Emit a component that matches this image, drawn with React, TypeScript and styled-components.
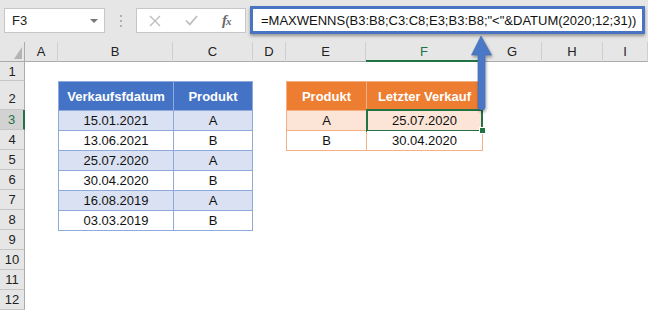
import React from 'react';
import styled, { createGlobalStyle } from 'styled-components';

const GlobalStyle = createGlobalStyle`
  html, body {
    margin: 0;
    padding: 0;
    background: #fff;
  }
  body {
    width: 648px;
    height: 310px;
    overflow: hidden;
    font-family: "Liberation Sans", Arial, sans-serif;
  }
`;

const Window = styled.div`
  position: relative;
  width: 648px;
  height: 310px;
  overflow: hidden;
  background: #fff;
`;

const Toolbar = styled.div`
  height: 42px;
  box-sizing: border-box;
  background: #e6e6e6;
  display: flex;
  align-items: flex-start;
  padding: 8px 0 0 4px;
`;

const NameBox = styled.div`
  width: 101px;
  height: 25px;
  box-sizing: border-box;
  background: #fff;
  border: 1px solid #c6c6c6;
  display: flex;
  align-items: center;
  justify-content: space-between;
  padding: 0 6px 0 7px;
  font-size: 13px;
  color: #222;
`;

const DropArrow = styled.span`
  width: 0;
  height: 0;
  border-left: 4px solid transparent;
  border-right: 4px solid transparent;
  border-top: 4px solid #777;
`;

const Grip = styled.div`
  margin: 7px 14px 0 15px;
  display: flex;
  flex-direction: column;
  gap: 3px;
  & > span {
    width: 2px;
    height: 2px;
    background: #b0b0b0;
  }
`;

const FnBox = styled.div`
  width: 110px;
  height: 25px;
  box-sizing: border-box;
  background: #fff;
  border: 1px solid #c6c6c6;
  display: flex;
  align-items: center;
  gap: 24px;
  padding-left: 12px;
`;

const Fx = styled.span`
  font-family: "Liberation Serif", "Times New Roman", serif;
  font-style: italic;
  font-weight: bold;
  font-size: 15px;
  color: #6a6a6a;
  letter-spacing: -1px;
  & > small {
    font-size: 11px;
  }
`;

const FormulaInput = styled.div`
  margin: -2px 0 0 4px;
  width: 395px;
  height: 28px;
  box-sizing: border-box;
  background: #fff;
  border: 3px solid #4a73c2;
  box-shadow: 0 2px 3px rgba(0, 0, 0, 0.35);
  display: flex;
  align-items: center;
  padding-left: 8px;
  font-size: 13px;
  color: #111;
  white-space: nowrap;
`;

const Sheet = styled.div`
  display: grid;
  grid-template-columns: 25px 33px 115px 80px 33px 80px 117px 59px 61px 45px;
  grid-template-rows: 20px 19px 29px repeat(10, 20px);
`;

const Corner = styled.div`
  grid-column: 1;
  grid-row: 1;
  position: relative;
  background: #e6e6e6;
  border-right: 1px solid #ababab;
  border-bottom: 1px solid #ababab;
  &::after {
    content: '';
    position: absolute;
    right: 2px;
    bottom: 2px;
    width: 0;
    height: 0;
    border-left: 8px solid transparent;
    border-bottom: 12px solid #b4b4b4;
  }
`;

const ColHeader = styled.div<{ $active?: boolean }>`
  grid-row: 1;
  background: #e6e6e6;
  border-right: 1px solid #cfcfcf;
  border-bottom: ${(p) => (p.$active ? '2px solid #217346' : '1px solid #ababab')};
  display: flex;
  align-items: center;
  justify-content: center;
  font-size: 13px;
  color: ${(p) => (p.$active ? '#217346' : '#222')};
`;

const RowHeader = styled.div<{ $active?: boolean; $row: number }>`
  grid-column: 1;
  grid-row: ${(p) => p.$row + 1};
  background: ${(p) => (p.$active ? '#d2d2d2' : '#e6e6e6')};
  border-right: ${(p) => (p.$active ? '2px solid #217346' : '1px solid #ababab')};
  border-bottom: 1px solid #c6c6c6;
  display: flex;
  align-items: ${(p) => (p.$row === 2 ? 'flex-end' : 'center')};
  justify-content: center;
  padding-bottom: ${(p) => (p.$row === 2 ? '3px' : '0')};
  font-size: 13px;
  color: ${(p) => (p.$active ? '#217346' : '#222')};
`;

type Palette = { head: string; band: string; line: string };

const blue: Palette = { head: '#4472c4', band: '#d9e1f2', line: '#8eaadb' };
const orange: Palette = { head: '#ed7d31', band: '#fce4d6', line: '#f4b084' };

const Table = styled.div<{ $p: Palette; $cols: string; $area: string }>`
  grid-area: ${(p) => p.$area};
  align-self: start;
  display: grid;
  grid-template-columns: ${(p) => p.$cols};
  grid-auto-rows: 19px;
  grid-template-rows: 28px;
  gap: 1px;
  padding: 1px;
  background: ${(p) => p.$p.line};
`;

const HeadCell = styled.div<{ $p: Palette }>`
  background: ${(p) => p.$p.head};
  color: #fff;
  font-weight: bold;
  font-size: 13px;
  display: flex;
  align-items: center;
  justify-content: center;
`;

const Cell = styled.div<{ $p: Palette; $band: boolean; $selected?: boolean }>`
  position: relative;
  background: ${(p) => (p.$band ? p.$p.band : '#fff')};
  color: #111;
  font-size: 13px;
  display: flex;
  align-items: flex-end;
  justify-content: center;
  padding-bottom: 2px;
  box-sizing: border-box;
  ${(p) =>
    p.$selected &&
    `
    &::before {
      content: '';
      position: absolute;
      top: -2px;
      left: -1px;
      right: -1px;
      bottom: -2px;
      border: 2px solid #217346;
    }
    &::after {
      content: '';
      position: absolute;
      right: -4px;
      bottom: -4px;
      width: 7px;
      height: 7px;
      box-sizing: border-box;
      background: #217346;
      border: 1px solid #fff;
      z-index: 2;
    }
  `}
`;

const Arrow = styled.svg`
  position: absolute;
  left: 466px;
  top: 30px;
  width: 32px;
  height: 84px;
  overflow: visible;
  filter: drop-shadow(1px 2px 1.5px rgba(0, 0, 0, 0.35));
`;

const columns = ['A', 'B', 'C', 'D', 'E', 'F', 'G', 'H', 'I'];

const sales = [
  ['15.01.2021', 'A'],
  ['13.06.2021', 'B'],
  ['25.07.2020', 'A'],
  ['30.04.2020', 'B'],
  ['16.08.2019', 'A'],
  ['03.03.2019', 'B'],
];

const latest = [
  ['A', '25.07.2020'],
  ['B', '30.04.2020'],
];

const App = () => {
  return (
    <Window>
      <GlobalStyle />
      <Toolbar>
        <NameBox>
          <span>F3</span>
          <DropArrow />
        </NameBox>
        <Grip>
          <span />
          <span />
          <span />
        </Grip>
        <FnBox>
          <svg width="12" height="12" viewBox="0 0 12 12">
            <path d="M1 1 L11 11 M11 1 L1 11" stroke="#bdbdbd" strokeWidth="1.4" />
          </svg>
          <svg width="13" height="11" viewBox="0 0 13 11">
            <path d="M1 5.5 L4.8 9.5 L12 1" stroke="#bdbdbd" strokeWidth="1.8" fill="none" />
          </svg>
          <Fx>
            f<small>x</small>
          </Fx>
        </FnBox>
        <FormulaInput>=MAXWENNS(B3:B8;C3:C8;E3;B3:B8;"&lt;"&amp;DATUM(2020;12;31))</FormulaInput>
      </Toolbar>

      <Sheet>
        <Corner />
        {columns.map((c) => (
          <ColHeader key={c} $active={c === 'F'}>
            {c}
          </ColHeader>
        ))}
        {Array.from({ length: 12 }, (_, i) => (
          <RowHeader key={i} $row={i + 1} $active={i + 1 === 3}>
            {i + 1}
          </RowHeader>
        ))}

        <Table $p={blue} $cols="114px 78px" $area="3 / 3 / 10 / 5">
          <HeadCell $p={blue}>Verkaufsfdatum</HeadCell>
          <HeadCell $p={blue}>Produkt</HeadCell>
          {sales.map(([date, product], i) => (
            <React.Fragment key={date}>
              <Cell $p={blue} $band={i % 2 === 0}>{date}</Cell>
              <Cell $p={blue} $band={i % 2 === 0}>{product}</Cell>
            </React.Fragment>
          ))}
        </Table>

        <Table $p={orange} $cols="79px 115px" $area="3 / 6 / 6 / 8">
          <HeadCell $p={orange}>Produkt</HeadCell>
          <HeadCell $p={orange}>Letzter Verkauf</HeadCell>
          {latest.map(([product, date], i) => (
            <React.Fragment key={product}>
              <Cell $p={orange} $band={i === 0}>{product}</Cell>
              <Cell $p={orange} $band={i === 0} $selected={i === 0}>
                {date}
              </Cell>
            </React.Fragment>
          ))}
        </Table>
      </Sheet>

      <Arrow viewBox="0 0 32 84">
        <path
          d="M15 6 L25.5 25 L19 25 L19 77 Q19 80 15.5 80 Q12 80 12 77 L12 25 L5.5 25 Z"
          fill="#4a78c6"
          stroke="#3f69b4"
          strokeWidth="0.6"
        />
      </Arrow>
    </Window>
  );
};

export default App;
